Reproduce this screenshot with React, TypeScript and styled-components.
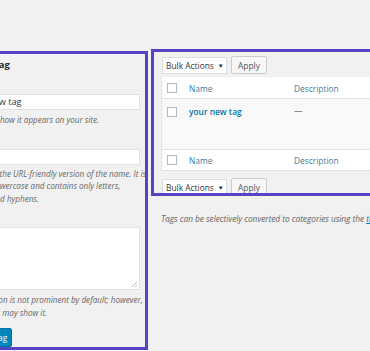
import React from "react";
import styled, { createGlobalStyle } from "styled-components";

const GlobalStyle = createGlobalStyle`
  html, body {
    margin: 0;
    padding: 0;
    background: #f1f1f1;
    overflow: hidden;
  }
  body {
    font-family: "Open Sans", "Noto Sans", Arial, sans-serif;
    color: #23282d;
    width: 370px;
    height: 351px;
  }
`;

const PURPLE = "#5b41c6";

const Page = styled.div`
  display: flex;
  align-items: flex-start;
  width: 370px;
  height: 351px;
  overflow: hidden;
`;

const FormPanel = styled.section`
  box-sizing: border-box;
  flex: none;
  width: 208px;
  height: 299px;
  margin: 51px 0 0 -60px;
  padding: 5px 5px 0 12px;
  border: 3px solid ${PURPLE};
  overflow: hidden;
  display: flex;
  flex-direction: column;
`;

const Heading = styled.h2`
  margin: 0 0 0 -6px;
  font-size: 9.4px;
  line-height: 12px;
  font-weight: 700;
  color: #23282d;
  white-space: nowrap;
`;

const Field = styled.div<{ $top: number }>`
  display: flex;
  flex-direction: column;
  margin-top: ${(p) => p.$top}px;
`;

const Label = styled.label`
  font-size: 8.4px;
  line-height: 11px;
  height: 11px;
  color: #23282d;
  white-space: nowrap;
  visibility: hidden;
`;

const TextInput = styled.div`
  box-sizing: border-box;
  margin-top: 3px;
  height: 16px;
  width: 100%;
  background: #fff;
  border: 1px solid #e2e2e2;
  padding: 0 4px 0 10px;
  font-size: 9.2px;
  line-height: 14px;
  color: #32373c;
  white-space: nowrap;
`;

const TextArea = styled.div`
  position: relative;
  box-sizing: border-box;
  margin-top: 3px;
  height: 63px;
  width: 100%;
  background: #fff;
  border: 1px solid #e2e2e2;
`;

const Grip = styled.svg`
  position: absolute;
  right: 1px;
  bottom: 1px;
`;

const Help = styled.p<{ $top: number; $shift?: number }>`
  margin: ${(p) => p.$top}px 0 0 ${(p) => p.$shift ?? 0}px;
  font-size: 8.1px;
  line-height: 12.5px;
  font-style: italic;
  color: #666;
  white-space: nowrap;
`;

const PrimaryButton = styled.button`
  box-sizing: border-box;
  align-self: flex-start;
  margin: 9px 0 0 -4px;
  height: 19px;
  padding: 0 4px;
  background: #0085ba;
  border: 1px solid #0073aa;
  border-radius: 2px;
  color: #fff;
  font-family: inherit;
  font-size: 8.4px;
  line-height: 17px;
  white-space: nowrap;
`;

const RightColumn = styled.div`
  flex: none;
  display: flex;
  flex-direction: column;
  margin: 49px 0 0 3px;
  width: 260px;
`;

const ListPanel = styled.section`
  box-sizing: border-box;
  height: 147px;
  padding: 5px 0 0 7px;
  border: 3px solid ${PURPLE};
  overflow: hidden;
  display: flex;
  flex-direction: column;
`;

const Toolbar = styled.div<{ $top: number }>`
  display: flex;
  gap: 4px;
  margin-top: ${(p) => p.$top}px;
  margin-left: 1px;
`;

const Select = styled.div`
  box-sizing: border-box;
  height: 17px;
  width: 65px;
  display: flex;
  align-items: center;
  gap: 4px;
  padding-left: 3px;
  background: #fff;
  border: 1px solid #ddd;
  font-size: 8.4px;
  color: #32373c;
  white-space: nowrap;
`;

const Caret = styled.span`
  font-size: 6px;
  color: #23282d;
`;

const Button = styled.div`
  box-sizing: border-box;
  height: 18px;
  margin-top: -1px;
  width: 36px;
  display: flex;
  align-items: center;
  justify-content: center;
  background: #f7f7f7;
  border: 1px solid #ccc;
  border-radius: 2px;
  font-size: 8.4px;
  color: #555;
`;

const Table = styled.div`
  margin-top: 3px;
  width: 300px;
  border-left: 1px solid #e5e5e5;
  display: flex;
  flex-direction: column;
`;

const Row = styled.div<{ $height: number; $bg: string }>`
  box-sizing: border-box;
  display: grid;
  grid-template-columns: 27px 105px 1fr;
  align-items: start;
  height: ${(p) => p.$height}px;
  background: ${(p) => p.$bg};
  border-bottom: 1px solid #e1e1e1;
`;

const CheckCell = styled.div<{ $top: number }>`
  padding: ${(p) => p.$top}px 0 0 5px;
`;

const CheckBox = styled.div`
  box-sizing: border-box;
  width: 10px;
  height: 10px;
  background: #fff;
  border: 1px solid #b4b9be;
`;

const Cell = styled.div<{ $top: number; $color: string; $bold?: boolean }>`
  padding-top: ${(p) => p.$top}px;
  font-size: 8.4px;
  line-height: 12px;
  color: ${(p) => p.$color};
  font-weight: ${(p) => (p.$bold ? 600 : 400)};
  white-space: nowrap;
`;

const Note = styled.p`
  margin: 17px 0 0 10px;
  font-size: 8.4px;
  letter-spacing: -0.06px;
  line-height: 12px;
  font-style: italic;
  color: #666;
  white-space: nowrap;
`;

const NoteLink = styled.a`
  color: #0073aa;
  text-decoration: underline;
`;

const HEAD = "#3f7e9c";

function ListToolbar({ top }: { top: number }) {
  return (
    <Toolbar $top={top}>
      <Select>
        Bulk Actions <Caret>▼</Caret>
      </Select>
      <Button>Apply</Button>
    </Toolbar>
  );
}

export default function App() {
  return (
    <>
      <GlobalStyle />
      <Page>
        <FormPanel>
          <Heading>Add New Tag</Heading>
          <Field $top={9}>
            <Label>Name</Label>
            <TextInput>your new tag</TextInput>
            <Help $top={4}>The name is how it appears on your site.</Help>
          </Field>
          <Field $top={8}>
            <Label>Slug</Label>
            <TextInput />
            <Help $top={3}>
              The “slug” is the URL-friendly version of the name. It is
              <br />
              usually all lowercase and contains only letters,
              <br />
              numbers, and hyphens.
            </Help>
          </Field>
          <Field $top={8}>
            <Label>Description</Label>
            <TextArea>
              <Grip width="7" height="7" viewBox="0 0 7 7">
                <path d="M6 1 L1 6 M6 4 L4 6" stroke="#aaa" strokeWidth="0.8" />
              </Grip>
            </TextArea>
            <Help $top={4} $shift={-2}>
              The description is not prominent by default; however,
              <br />
              some themes may show it.
            </Help>
          </Field>
          <PrimaryButton>Add New Tag</PrimaryButton>
        </FormPanel>
        <RightColumn>
          <ListPanel>
            <ListToolbar top={0} />
            <Table>
              <Row $height={22} $bg="#fff">
                <CheckCell $top={6}>
                  <CheckBox />
                </CheckCell>
                <Cell $top={6} $color={HEAD}>Name</Cell>
                <Cell $top={6} $color={HEAD}>Description</Cell>
              </Row>
              <Row $height={51} $bg="#f9f9f9">
                <CheckCell $top={8}>
                  <CheckBox />
                </CheckCell>
                <Cell $top={7} $color="#0073aa" $bold>your new tag</Cell>
                <Cell $top={6} $color="#666">—</Cell>
              </Row>
              <Row $height={21} $bg="#fff">
                <CheckCell $top={5}>
                  <CheckBox />
                </CheckCell>
                <Cell $top={5} $color={HEAD}>Name</Cell>
                <Cell $top={5} $color={HEAD}>Description</Cell>
              </Row>
            </Table>
            <ListToolbar top={8} />
          </ListPanel>
          <Note>
            Tags can be selectively converted to categories using the{" "}
            <NoteLink>tag to category converter</NoteLink>.
          </Note>
        </RightColumn>
      </Page>
    </>
  );
}
